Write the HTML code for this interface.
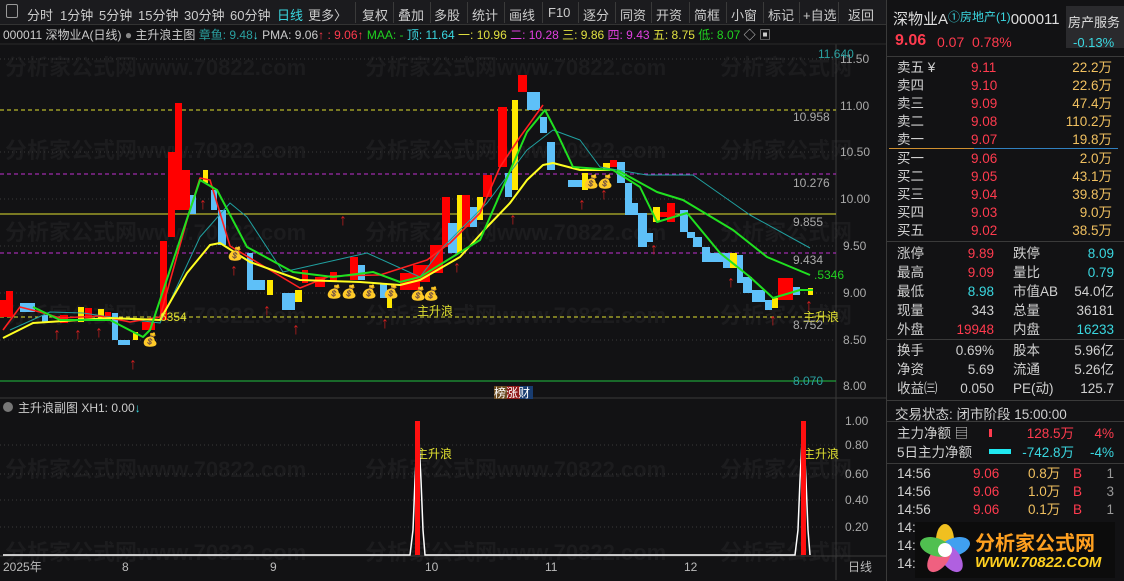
<!DOCTYPE html>
<html><head><meta charset="utf-8">
<style>
*{margin:0;padding:0;box-sizing:border-box}
body{width:1124px;height:581px;background:#121214;overflow:hidden;font-family:"Liberation Sans","Noto Sans CJK SC",sans-serif;color:#ccc;position:relative}
.a{position:absolute;white-space:nowrap}
#tb{position:absolute;left:0;top:0;width:886px;height:25px;background:#1b1b1e;border-bottom:1px solid #333;font-size:13px;color:#ccc}
#tb span{position:absolute;top:5px}
.sep{position:absolute;top:2px;width:1px;height:21px;background:#3a3a3a}
#rp{position:absolute;left:886px;top:0;width:238px;height:581px;background:#121214;border-left:1px solid #3a3a3a;font-size:13.5px}
.r{color:#ff3b4e}.c{color:#3ad7e0}.y{color:#f0c060}.w{color:#d0d0d0}
.hl{position:absolute;left:0;width:238px;height:1px;background:#3a3a3a}
</style></head><body>
<div id="tb">
<span style="left:6px;top:4px;width:12px;height:14px;border:1px solid #999;border-radius:2px"></span>
<span style="left:27px">分时</span><span style="left:60px">1分钟</span><span style="left:99px">5分钟</span><span style="left:138px">15分钟</span><span style="left:184px">30分钟</span><span style="left:230px">60分钟</span><span style="left:277px;color:#3ad7e0">日线</span><span style="left:308px">更多〉</span>
<div class="sep" style="left:355px"></div><span style="left:362px">复权</span>
<div class="sep" style="left:393px"></div><span style="left:398px">叠加</span>
<div class="sep" style="left:430px"></div><span style="left:434px">多股</span>
<div class="sep" style="left:467px"></div><span style="left:472px">统计</span>
<div class="sep" style="left:504px"></div><span style="left:509px">画线</span>
<div class="sep" style="left:542px"></div><span style="left:548px">F10</span>
<div class="sep" style="left:578px"></div><span style="left:583px">逐分</span>
<div class="sep" style="left:615px"></div><span style="left:620px">同资</span>
<div class="sep" style="left:651px"></div><span style="left:656px">开资</span>
<div class="sep" style="left:689px"></div><span style="left:694px">简框</span>
<div class="sep" style="left:726px"></div><span style="left:731px">小窗</span>
<div class="sep" style="left:763px"></div><span style="left:768px">标记</span>
<div class="sep" style="left:799px"></div><span style="left:803px">+自选</span>
<div class="sep" style="left:838px"></div><span style="left:848px">返回</span>
</div>
<div class="a" style="left:3px;top:26px;font-size:12px;color:#ccc">000011 深物业A(日线) <span style="color:#888">●</span> 主升浪主图 <span style="color:#2aa0a0">章鱼: 9.48</span><span class="c">↓</span> PMA: 9.06<span class="r">↑</span> <span class="r">: 9.06↑</span> <span style="color:#20d020">MAA: -</span> <span class="c">顶: 11.64</span> <span style="color:#e0e040">一: 10.96</span> <span style="color:#e040e0">二: 10.28</span> <span style="color:#e0e040">三: 9.86</span> <span style="color:#e040e0">四: 9.43</span> <span style="color:#e0e040">五: 8.75</span> <span style="color:#20d020">低: 8.07</span> ◇ ▣</div>

<svg class="a" style="left:0;top:0" width="886" height="581" font-family="Liberation Sans,Noto Sans CJK SC,sans-serif">
<g fill="#1c1c1e" font-size="22" font-weight="bold">
<text x="5" y="75">分析家公式网www.70822.com</text><text x="365" y="75">分析家公式网www.70822.com</text><text x="720" y="75">分析家公式网</text>
<text x="5" y="158">分析家公式网www.70822.com</text><text x="365" y="158">分析家公式网www.70822.com</text><text x="720" y="158">分析家公式网</text>
<text x="5" y="240">分析家公式网www.70822.com</text><text x="365" y="240">分析家公式网www.70822.com</text><text x="720" y="240">分析家公式网</text>
<text x="5" y="323">分析家公式网www.70822.com</text><text x="365" y="323">分析家公式网www.70822.com</text><text x="720" y="323">分析家公式网</text>
<text x="5" y="477">分析家公式网www.70822.com</text><text x="365" y="477">分析家公式网www.70822.com</text><text x="720" y="477">分析家公式网</text>
<text x="5" y="560">分析家公式网www.70822.com</text><text x="365" y="560">分析家公式网www.70822.com</text><text x="720" y="560">分析家公式网</text>
</g>
<line x1="836" y1="44" x2="836" y2="580" stroke="#3a3a3a"/>
<line x1="0" y1="44" x2="886" y2="44" stroke="#2a2a2a"/>
<g stroke="#3a3a3a" stroke-dasharray="1 3">
<line x1="0" y1="59" x2="836" y2="59"/><line x1="0" y1="152" x2="836" y2="152"/><line x1="0" y1="199" x2="836" y2="199"/><line x1="0" y1="246" x2="836" y2="246"/><line x1="0" y1="293" x2="836" y2="293"/><line x1="0" y1="340" x2="836" y2="340"/>
<line x1="0" y1="445" x2="836" y2="445"/><line x1="0" y1="474" x2="836" y2="474"/><line x1="0" y1="500" x2="836" y2="500"/><line x1="0" y1="527" x2="836" y2="527"/>
</g>
<line x1="0" y1="110" x2="836" y2="110" stroke="#e0e030" stroke-dasharray="4 3"/>
<line x1="0" y1="174" x2="836" y2="174" stroke="#c030d0" stroke-dasharray="4 3"/>
<line x1="0" y1="214" x2="836" y2="214" stroke="#e0e030"/>
<line x1="0" y1="253" x2="836" y2="253" stroke="#c030d0" stroke-dasharray="4 3"/>
<line x1="0" y1="317" x2="836" y2="317" stroke="#e0e030" stroke-dasharray="4 3"/>
<line x1="0" y1="381" x2="836" y2="381" stroke="#20c040"/>
<line x1="0" y1="398" x2="886" y2="398" stroke="#3a3a3a"/>
<line x1="0" y1="556" x2="886" y2="556" stroke="#3a3a3a"/>
<g fill="#ff0000">
<rect x="0" y="300" width="6" height="17"/><rect x="6" y="291" width="7" height="26"/>
<rect x="60" y="315" width="8" height="8"/><rect x="85" y="308" width="7" height="10"/><rect x="105" y="312" width="6" height="8"/>
<rect x="142" y="322" width="13" height="8"/><rect x="160" y="241" width="7" height="79"/><rect x="168" y="152" width="7" height="85"/><rect x="175" y="103" width="7" height="107"/><rect x="182" y="170" width="8" height="40"/>
<rect x="302" y="270" width="6" height="13"/><rect x="315" y="277" width="10" height="10"/><rect x="330" y="272" width="7" height="10"/><rect x="350" y="257" width="8" height="23"/><rect x="413" y="267" width="7" height="23"/>
<rect x="400" y="273" width="13" height="17"/><rect x="413" y="265" width="17" height="17"/><rect x="430" y="245" width="13" height="28"/><rect x="442" y="197" width="8" height="50"/><rect x="460" y="195" width="10" height="32"/><rect x="483" y="175" width="9" height="22"/><rect x="498" y="107" width="9" height="60"/><rect x="518" y="75" width="9" height="17"/>
<rect x="610" y="160" width="7" height="7"/><rect x="660" y="212" width="7" height="5"/><rect x="667" y="203" width="8" height="19"/><rect x="778" y="278" width="15" height="22"/>
</g>
<g fill="#5ec0f8">
<rect x="20" y="303" width="15" height="9"/><rect x="42" y="315" width="6" height="7"/><rect x="112" y="313" width="6" height="27"/><rect x="118" y="340" width="12" height="5"/>
<rect x="190" y="195" width="6" height="19"/><rect x="211" y="190" width="6" height="20"/><rect x="218" y="210" width="8" height="35"/><rect x="247" y="253" width="6" height="37"/><rect x="252" y="280" width="13" height="10"/><rect x="282" y="293" width="13" height="17"/><rect x="358" y="265" width="7" height="15"/><rect x="380" y="283" width="7" height="15"/>
<rect x="448" y="223" width="9" height="30"/><rect x="470" y="207" width="7" height="20"/><rect x="505" y="173" width="7" height="24"/><rect x="527" y="92" width="13" height="18"/><rect x="540" y="117" width="7" height="16"/><rect x="547" y="142" width="8" height="28"/><rect x="568" y="180" width="14" height="7"/>
<rect x="617" y="162" width="8" height="21"/><rect x="625" y="183" width="7" height="32"/><rect x="632" y="203" width="6" height="12"/><rect x="638" y="213" width="9" height="34"/><rect x="647" y="233" width="6" height="9"/>
<rect x="680" y="210" width="8" height="22"/><rect x="687" y="232" width="8" height="6"/><rect x="693" y="237" width="9" height="10"/><rect x="702" y="247" width="8" height="15"/><rect x="710" y="253" width="13" height="9"/><rect x="723" y="253" width="7" height="15"/><rect x="737" y="255" width="6" height="28"/><rect x="743" y="277" width="9" height="16"/><rect x="752" y="290" width="13" height="12"/><rect x="765" y="300" width="7" height="10"/><rect x="793" y="287" width="7" height="8"/>
</g>
<g fill="#ffe800">
<rect x="78" y="307" width="6" height="15"/><rect x="98" y="309" width="6" height="9"/><rect x="133" y="332" width="5" height="8"/><rect x="203" y="170" width="5" height="13"/><rect x="267" y="280" width="6" height="15"/><rect x="295" y="290" width="7" height="12"/><rect x="387" y="290" width="5" height="18"/>
<rect x="457" y="195" width="5" height="58"/><rect x="477" y="197" width="6" height="23"/><rect x="512" y="100" width="6" height="90"/><rect x="582" y="173" width="6" height="17"/><rect x="603" y="163" width="7" height="7"/><rect x="653" y="207" width="7" height="15"/><rect x="730" y="253" width="7" height="15"/><rect x="772" y="298" width="6" height="10"/><rect x="808" y="288" width="5" height="7"/>
</g>
<g fill="none" stroke-linejoin="round">
<polyline stroke="#20a0a0" stroke-width="1" points="10,330 50,312 83,313 110,317 160,323 200,237 230,203 247,217 283,272 367,253 420,277 443,247 487,203 527,150 553,130 580,140 600,167 647,175 693,175 750,215 810,248"/>
<polyline stroke="#ff2020" stroke-width="1.6" points="3,330 20,307 40,312 60,318 100,316 130,322 160,317 187,220 200,178 210,180 230,246 300,288 330,276 380,275 427,260 450,243 480,213 500,167 520,137 543,105"/>
<polyline stroke="#ffff20" stroke-width="2" points="3,338 33,323 110,318 160,320 173,297 187,273 210,245 220,243 250,262 300,280 360,282 400,285 420,280 460,257 487,227 510,203 527,180 543,165 553,163 580,170 610,170"/>
<polyline stroke="#20e020" stroke-width="2" points="33,307 60,320 110,320 143,337 150,330 200,180 217,190 247,247 293,272 333,277 373,272 400,282 420,277 480,240 527,132 545,110 557,133 573,167 613,170 640,187 657,222 687,213 720,253 750,277 773,298 800,290 813,290"/>
<polyline stroke="#20e020" stroke-width="2" points="617,170 657,192 683,200 733,230 767,257 810,275"/>
</g>
<g fill="#d02020" font-size="16" font-weight="bold">
<text x="53" y="339">↑</text><text x="74" y="339">↑</text><text x="95" y="337">↑</text><text x="129" y="369">↑</text><text x="199" y="209">↑</text><text x="230" y="275">↑</text><text x="263" y="315">↑</text><text x="292" y="334">↑</text><text x="381" y="328">↑</text><text x="339" y="225">↑</text><text x="453" y="272">↑</text><text x="509" y="224">↑</text><text x="578" y="209">↑</text><text x="600" y="199">↑</text><text x="650" y="254">↑</text><text x="727" y="287">↑</text><text x="769" y="325">↑</text><text x="805" y="310">↑</text>
</g>
<g font-size="13">
<text x="142" y="344">💰</text><text x="227" y="258">💰</text><text x="326" y="296">💰</text><text x="341" y="296">💰</text><text x="361" y="296">💰</text><text x="383" y="296">💰</text><text x="410" y="298">💰</text><text x="423" y="298">💰</text><text x="583" y="186">💰</text><text x="597" y="186">💰</text>
</g>
<g fill="#e0e030" font-size="12">
<text x="160" y="321">6354</text><text x="417" y="315">主升浪</text><text x="803" y="321">主升浪</text><text x="416" y="458">主升浪</text><text x="803" y="458">主升浪</text>
</g>
<g font-size="12" fill="#aaa">
<text x="840" y="63">11.50</text><text x="840" y="110">11.00</text><text x="840" y="156">10.50</text><text x="840" y="203">10.00</text><text x="843" y="250">9.50</text><text x="843" y="297">9.00</text><text x="843" y="344">8.50</text><text x="843" y="390">8.00</text>
<text x="793" y="121">10.958</text><text x="793" y="187">10.276</text><text x="793" y="226">9.855</text><text x="793" y="264">9.434</text><text x="793" y="329">8.752</text>
<text x="845" y="425">1.00</text><text x="845" y="449">0.80</text><text x="845" y="478">0.60</text><text x="845" y="504">0.40</text><text x="845" y="531">0.20</text>
</g>
<text x="818" y="58" font-size="12" fill="#2aa0a0">11.640</text>
<text x="793" y="385" font-size="12" fill="#2aa0a0">8.070</text>
<text x="814" y="279" font-size="12" fill="#20d020">.5346</text>
<rect x="494" y="386" width="13" height="13" fill="#6a4a20"/><rect x="507" y="386" width="13" height="13" fill="#901818"/><rect x="520" y="386" width="13" height="13" fill="#183c70"/>
<text x="494" y="397" font-size="12" fill="#fff">榜涨财</text>
<circle cx="8" cy="407" r="5" fill="#777"/>
<text x="18" y="412" font-size="12" fill="#ccc">主升浪副图 XH1: 0.00<tspan fill="#3ad7e0">↓</tspan></text>
<polyline fill="none" stroke="#fff" stroke-width="1.5" points="3,555 410,555 413,530 415,480 418,421 421,480 423,530 425,555 795,555 798,530 800,480 803,421 806,480 808,530 810,555"/>
<rect x="415" y="421" width="5" height="134" fill="#ff1010"/><rect x="801" y="421" width="5" height="134" fill="#ff1010"/>
<g font-size="12" fill="#bbb"><text x="3" y="571">2025年</text><text x="122" y="571">8</text><text x="270" y="571">9</text><text x="425" y="571">10</text><text x="545" y="571">11</text><text x="684" y="571">12</text><text x="848" y="571">日线</text></g>
</svg>

<div id="rp">
<div class="a" style="left:6px;top:8px;font-size:15px;color:#ddd">深物业A<span class="c" style="font-size:12px;vertical-align:top">①房地产(1)</span>000011</div>
<div class="a" style="left:179px;top:6px;width:59px;height:42px;background:#2a2a2d"></div>
<div class="a" style="left:181px;top:12px;font-size:13px;color:#ddd">房产服务</div>
<div class="a c" style="left:186px;top:35px;font-size:13px">-0.13%</div>
<div class="a r" style="left:8px;top:32px;font-size:16px;font-weight:bold">9.06</div>
<div class="a r" style="left:50px;top:34px;font-size:14px">0.07 &nbsp;0.78%</div>
<div class="hl" style="top:56px"></div>
<div class="a w" style="left:10px;top:59px;line-height:18px">卖五 ¥<br>卖四<br>卖三<br>卖二<br>卖一</div>
<div class="a r" style="left:84px;top:59px;line-height:18px">9.11<br>9.10<br>9.09<br>9.08<br>9.07</div>
<div class="a y" style="right:12px;top:59px;line-height:18px;text-align:right">22.2万<br>22.6万<br>47.4万<br>110.2万<br>19.8万</div>
<div class="a" style="left:2px;top:148px;width:85px;height:1px;background:#d09030"></div>
<div class="a" style="left:87px;top:148px;width:144px;height:1px;background:#3080c0"></div>
<div class="a w" style="left:10px;top:150px;line-height:18px">买一<br>买二<br>买三<br>买四<br>买五</div>
<div class="a r" style="left:84px;top:150px;line-height:18px">9.06<br>9.05<br>9.04<br>9.03<br>9.02</div>
<div class="a y" style="right:12px;top:150px;line-height:18px;text-align:right">2.0万<br>43.1万<br>39.8万<br>9.0万<br>38.5万</div>
<div class="hl" style="top:241px"></div>
<div class="a w" style="left:10px;top:244px;line-height:19px">涨停<br>最高<br>最低<br>现量<br>外盘</div>
<div class="a" style="right:130px;top:244px;line-height:19px;text-align:right"><span class="r">9.89</span><br><span class="r">9.09</span><br><span class="c">8.98</span><br><span class="w">343</span><br><span class="r">19948</span></div>
<div class="a w" style="left:126px;top:244px;line-height:19px">跌停<br>量比<br>市值AB<br>总量<br>内盘</div>
<div class="a" style="right:10px;top:244px;line-height:19px;text-align:right"><span class="c">8.09</span><br><span class="c">0.79</span><br><span class="w">54.0亿</span><br><span class="w">36181</span><br><span class="c">16233</span></div>
<div class="hl" style="top:339px"></div>
<div class="a w" style="left:10px;top:341px;line-height:19px">换手<br>净资<br>收益㈢</div>
<div class="a w" style="right:130px;top:341px;line-height:19px;text-align:right">0.69%<br>5.69<br>0.050</div>
<div class="a w" style="left:126px;top:341px;line-height:19px">股本<br>流通<br>PE(动)</div>
<div class="a w" style="right:10px;top:341px;line-height:19px;text-align:right">5.96亿<br>5.26亿<br>125.7</div>
<div class="hl" style="top:400px"></div>
<div class="a w" style="left:8px;top:403px">交易状态: 闭市阶段 15:00:00</div>
<div class="hl" style="top:421px"></div>
<div class="a w" style="left:10px;top:424px;line-height:19px">主力净额 ▤<br>5日主力净额</div>
<div class="a" style="left:102px;top:429px;width:3px;height:8px;background:#ff3b4e"></div>
<div class="a" style="left:102px;top:449px;width:22px;height:5px;background:#20e8f0"></div>
<div class="a" style="right:50px;top:424px;line-height:19px;text-align:right"><span class="r">128.5万</span><br><span class="c">-742.8万</span></div>
<div class="a" style="right:10px;top:424px;line-height:19px;text-align:right"><span class="r">4%</span><br><span class="c">-4%</span></div>
<div class="hl" style="top:463px"></div>
<div class="a w" style="left:10px;top:465px;line-height:18px">14:56<br>14:56<br>14:56<br>14:56<br>14:56<br>14:56</div>
<div class="a r" style="left:86px;top:465px;line-height:18px">9.06<br>9.06<br>9.06</div>
<div class="a y" style="left:141px;top:465px;line-height:18px">0.8万<br>1.0万<br>0.1万</div>
<div class="a r" style="left:186px;top:465px;line-height:18px">B<br>B<br>B</div>
<div class="a" style="right:10px;top:465px;line-height:18px;color:#999">1<br>3<br>1</div>
<div class="a" style="left:28px;top:522px;width:200px;height:56px;background:#0c0c0c"></div>
<svg class="a" style="left:28px;top:522px" width="60" height="56"><g transform="translate(30,28)"><ellipse rx="9" ry="16" fill="#f0c020" transform="rotate(0) translate(0,-10)"/><ellipse rx="9" ry="16" fill="#40a0f0" transform="rotate(72) translate(0,-10)"/><ellipse rx="9" ry="16" fill="#b060e0" transform="rotate(144) translate(0,-10)"/><ellipse rx="9" ry="16" fill="#f06080" transform="rotate(216) translate(0,-10)"/><ellipse rx="9" ry="16" fill="#50c050" transform="rotate(288) translate(0,-10)"/><circle r="7" fill="#fff"/></g></svg>
<div class="a" style="left:88px;top:527px;font-size:20px;font-weight:bold;color:#ffa020">分析家公式网</div>
<div class="a" style="left:88px;top:554px;font-size:15px;font-weight:bold;font-style:italic;color:#ffd020">WWW.70822.COM</div>
</div>
</body></html>
